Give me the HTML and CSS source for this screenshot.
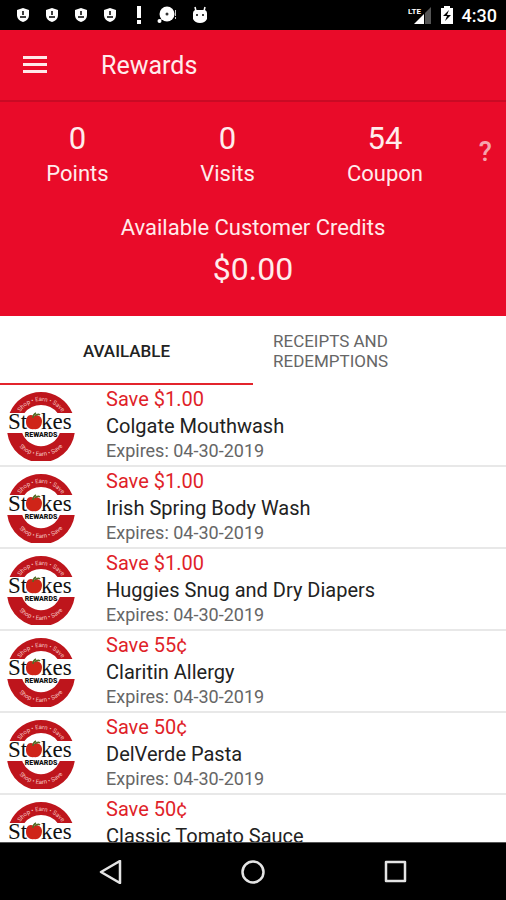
FILE: index.html
```html
<!DOCTYPE html>
<html lang="en">
<head>
<meta charset="utf-8">
<meta name="viewport" content="width=device-width, initial-scale=1">
<title>Rewards</title>
<link rel="stylesheet" href="styles.css">
</head>
<body>
<svg class="defs" aria-hidden="true">
  <symbol id="shield" viewBox="0 0 14 16">
    <path fill="#fff" d="M7 1l6 2v5c0 3.500-2.500 6-6 7-3.500-1-6-3.500-6-7V3z"/>
    <path fill="#000" d="M6 4h2v4H6zM4 9h6v2H4z" opacity=".75"/>
  </symbol>
  <symbol id="stokes" viewBox="0 0 70 70">
    <path fill="#be151c" d="M3.600 22a34 34 0 0 1 62.800 0H51.500a21 21 0 0 0-33 0zM1.300 42h14.900a20 20 0 0 0 37.600 0h14.900a34 34 0 0 1-67.400 0z"/>
    <path id="arc-top" fill="none" d="M10 35a25 25 0 0 1 50 0"/>
    <path id="arc-bottom" fill="none" d="M5 35a30 30 0 0 0 60 0"/>
    <text class="logo-arc"><textPath href="#arc-top" startOffset="50%">Shop • Earn • Save</textPath></text>
    <text class="logo-arc"><textPath href="#arc-bottom" startOffset="50%">Shop • Earn • Save</textPath></text>
    <text class="logo-name" x="2" y="38">St</text>
    <text class="logo-name" x="35" y="38">kes</text>
    <path fill="#cf2418" d="M28 25c-5-3-8 1-8 6s4 8 8 7c4 1 8-2 8-8 0-4-4-7-8-5z"/>
    <path fill="none" stroke="#536b25" stroke-width="1.500" d="M27 27c0-2 1-4 3-5M29 25c2-2 4-2 5-1"/>
    <text class="logo-sub" x="35" y="46">REWARDS</text>
  </symbol>
</svg>
<div class="screen">
  <div class="status">
    <div class="status-left">
      <svg class="shield"><use href="#shield"/></svg>
      <svg class="shield"><use href="#shield"/></svg>
      <svg class="shield"><use href="#shield"/></svg>
      <svg class="shield"><use href="#shield"/></svg>
      <svg class="alert" viewBox="0 0 6 20"><path fill="#fff" d="M1 1h4v12H1zM1 15h4v4H1z"/></svg>
      <svg class="disc" viewBox="0 0 20 18"><circle cx="10" cy="8" r="7.500" fill="#fff"/><circle cx="10" cy="8" r="1.500" fill="#333"/><circle cx="2.500" cy="15" r="2" fill="#fff"/><path d="M5 12l-2 3" stroke="#fff" stroke-width="1"/><path fill="#ccc" d="M18 4h1v6h-1zM18 11h1v2h-1z"/></svg>
      <svg class="droid" viewBox="0 0 16 18"><path fill="#fff" d="M1 7q0-2 2-3h10q2 1 2 3v6q-2 4-7 4t-7-4z"/><path d="M4 5L3 1M12 5l1-4" stroke="#fff" stroke-width="1.500"/><circle cx="5" cy="9" r="1" /><circle cx="11" cy="9" r="1"/></svg>
    </div>
    <div class="status-right">
      <svg class="signal" viewBox="0 0 24 20"><path fill="#fff" d="M6 19L16 9v10z"/><path fill="#555" d="M17 8l6-6v17h-6z"/><text class="lte" x="0" y="9">LTE</text></svg>
      <svg class="battery" viewBox="0 0 12 18"><path fill="#fff" d="M0 2h3V0h6v2h3v16H0z"/><path d="M8 4L2 10h4l-2 5 6-6H6z"/></svg>
      <time>4:30</time>
    </div>
  </div>
  <header class="appbar">
    <button class="menu" aria-label="Menu"><svg viewBox="0 0 24 18"><path fill="#ffe9e9" d="M0 0h24v3H0zM0 7h24v3H0zM0 14h24v3H0z"/></svg></button>
    <h1>Rewards</h1>
  </header>
  <section class="summary">
    <div class="stats">
      <div class="stat"><strong>0</strong><span>Points</span></div>
      <div class="stat"><strong>0</strong><span>Visits</span></div>
      <div class="stat"><strong>54</strong><span>Coupon</span></div>
      <button class="help" aria-label="Help">?</button>
    </div>
    <p class="credit-label">Available Customer Credits</p>
    <p class="credit">$0.00</p>
  </section>
  <nav class="tabs">
    <button class="tab active">AVAILABLE</button>
    <button class="tab">RECEIPTS AND REDEMPTIONS</button>
  </nav>
  <ul class="list">
    <li><svg class="logo"><use href="#stokes"/></svg><div><p class="save">Save $1.00</p><p class="item">Colgate Mouthwash</p><p class="date">Expires: 04-30-2019</p></div></li>
    <li><svg class="logo"><use href="#stokes"/></svg><div><p class="save">Save $1.00</p><p class="item">Irish Spring Body Wash</p><p class="date">Expires: 04-30-2019</p></div></li>
    <li><svg class="logo"><use href="#stokes"/></svg><div><p class="save">Save $1.00</p><p class="item">Huggies Snug and Dry Diapers</p><p class="date">Expires: 04-30-2019</p></div></li>
    <li><svg class="logo"><use href="#stokes"/></svg><div><p class="save">Save 55¢</p><p class="item">Claritin Allergy</p><p class="date">Expires: 04-30-2019</p></div></li>
    <li><svg class="logo"><use href="#stokes"/></svg><div><p class="save">Save 50¢</p><p class="item">DelVerde Pasta</p><p class="date">Expires: 04-30-2019</p></div></li>
    <li><svg class="logo"><use href="#stokes"/></svg><div><p class="save">Save 50¢</p><p class="item">Classic Tomato Sauce</p></div></li>
  </ul>
  <nav class="system">
    <button aria-label="Back"><svg viewBox="0 0 24 24"><path d="M21 1v22L2 12z"/></svg></button>
    <button aria-label="Home"><svg viewBox="0 0 24 24"><circle cx="12" cy="12" r="10.500"/></svg></button>
    <button aria-label="Recent apps"><svg viewBox="0 0 24 24"><rect x="3" y="2" width="19" height="19"/></svg></button>
  </nav>
</div>
</body>
</html>
```
FILE: styles.css
```css
* { box-sizing: border-box; }
body, h1, p, ul { margin: 0; padding: 0; }
body { font-family: Roboto, "Liberation Sans", sans-serif; background: #fff; color: #222; }
button { border: 0; padding: 0; background: none; font: inherit; color: inherit; }
svg { display: block; }
.defs { position: absolute; width: 0; height: 0; }
.screen { height: 100vh; display: flex; flex-direction: column; overflow: hidden; }

.status { flex: none; height: 30px; padding: 0 9px 0 16px; background: #000; color: #fff; display: flex; justify-content: space-between; align-items: center; }
.status-left, .status-right { display: flex; align-items: center; }
.status-left { gap: 15px; }
.shield { width: 14px; height: 16px; }
.alert { width: 6px; height: 20px; margin-left: 4px; }
.disc { width: 20px; height: 18px; }
.droid { width: 16px; height: 18px; }
.status-right { gap: 9px; }
.signal { width: 24px; height: 20px; }
.lte { font-size: 8px; font-weight: 700; fill: #fff; }
.battery { width: 12px; height: 18px; }
.status time { font-size: 18px; font-weight: 500; }

.appbar { flex: none; height: 72px; padding-left: 23px; display: flex; align-items: center; gap: 54px; background: #e90b29; color: #ffecec; border-bottom: 2px solid #c90a24; }
.menu svg { width: 24px; height: 18px; }
h1 { font-size: 25px; font-weight: 400; }

.summary { flex: none; background: #e90b29; color: #ffecec; text-align: center; padding: 19px 0 27px; }
.stats { display: grid; grid-template-columns: 155fr 145fr 170fr; padding-right: 36px; position: relative; }
.stat { display: flex; flex-direction: column; }
.stat strong { font-size: 31px; font-weight: 400; line-height: 36px; }
.stat span, .credit-label { font-size: 22px; line-height: 34px; }
.help { position: absolute; right: 14px; top: 15px; font-size: 27px; line-height: 32px; font-weight: 500; color: #f5a3ad; }
.credit-label { margin-top: 20px; }
.credit { font-size: 32px; line-height: 40px; margin-top: 4px; }

.tabs { flex: none; display: grid; grid-template-columns: 1fr 1fr; height: 69px; background: #fff; }
.tab { font-size: 17px; line-height: 20px; color: #666; border-bottom: 2px solid transparent; text-align: left; padding: 2px 100px 0 20px; }
.tab.active { color: #222; border-bottom-color: #e3242c; text-align: center; padding: 2px 0 0; font-weight: 500; }

.list { flex: 1; min-height: 0; overflow: hidden; list-style: none; }
.list li { height: 82px; padding-left: 6px; display: flex; gap: 30px; border-bottom: 2px solid #e8e8e8; }
.logo { flex: none; width: 70px; height: 70px; margin-top: 6px; overflow: visible; }
.save { font-size: 20px; line-height: 28px; color: #e01f29; }
.item { font-size: 20px; line-height: 26px; }
.date { font-size: 18px; line-height: 24px; color: #666; }
.logo-arc { font: 6px Roboto, sans-serif; fill: #f6c9c6; text-anchor: middle; }
.logo-name { font: 23px "Liberation Serif", serif; fill: #111; }
.logo-sub { font: 900 7px Roboto, sans-serif; fill: #111; text-anchor: middle; }

.system { flex: none; height: 58px; display: flex; justify-content: center; align-items: center; gap: 118px; background: #000; border-top: 1px solid #555; }
.system svg { width: 24px; height: 24px; fill: none; stroke: #e4e4e4; stroke-width: 2.5px; stroke-linejoin: round; }
```
